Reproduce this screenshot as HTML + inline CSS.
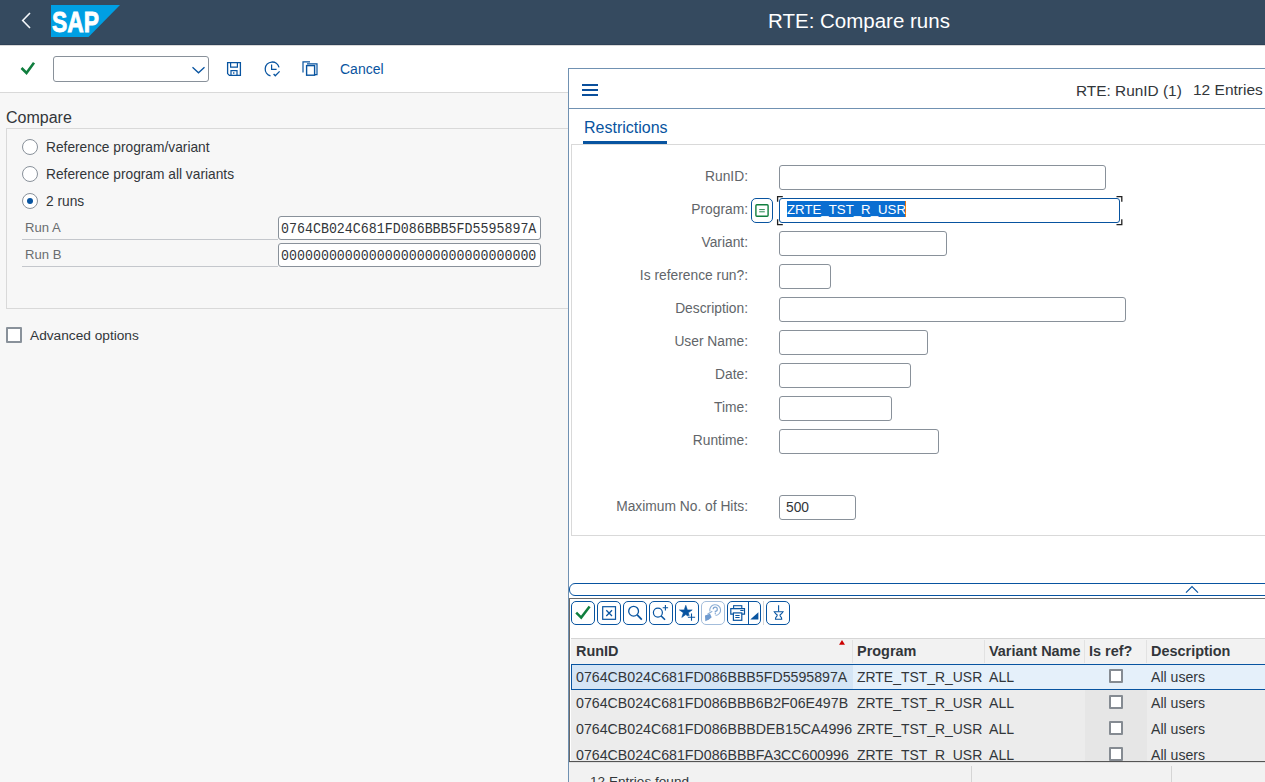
<!DOCTYPE html>
<html><head><meta charset="utf-8">
<style>
*{box-sizing:border-box;margin:0;padding:0}
html,body{width:1265px;height:782px;overflow:hidden;background:#f7f7f7;font-family:"Liberation Sans",sans-serif;color:#32363a}
.a{position:absolute}
.t{position:absolute;white-space:nowrap;line-height:1}
.inp{position:absolute;background:#fff;border:1px solid #89919a;border-radius:3px}
.lbl{position:absolute;white-space:nowrap;line-height:1;font-size:13.8px;color:#616569;text-align:right;right:517px}
.radio{position:absolute;width:16px;height:16px;border:1px solid #89919a;border-radius:50%;background:#fff}
.btn{position:absolute;top:601px;width:24px;height:24px;border:1px solid #0854a0;border-radius:5px;background:#fff}
.gh{position:absolute;top:644px;font-weight:bold;font-size:14.45px;line-height:1;white-space:nowrap;color:#32363a}
.r{position:absolute;font-size:14.1px;line-height:1;white-space:nowrap;color:#32363a}
.cb{position:absolute;left:1109px;width:14px;height:14px;border:2px solid #858b92;background:#fff;border-radius:1px}
</style></head><body>

<!-- shell header -->
<div class="a" style="left:0;top:0;width:1265px;height:45px;background:#354a5f;border-bottom:1px solid #2e4156;box-shadow:0 1px 1px rgba(0,0,0,0.12)"></div>
<svg class="a" style="left:0;top:0" width="130" height="44" viewBox="0 0 130 44">
  <path d="M30 13 L22.7 20.5 L30 28" fill="none" stroke="#f4f7fa" stroke-width="1.6"/>
  <polygon points="51,5 120,5 88.5,37 51,37" fill="#009fe3"/>
  <text x="52" y="32" font-family="Liberation Sans" font-weight="bold" font-size="30" fill="#fff" stroke="#fff" stroke-width="0.9" textLength="47" lengthAdjust="spacingAndGlyphs">SAP</text>
</svg>
<div class="t" style="left:768px;top:11px;font-size:20.5px;color:#fff">RTE: Compare runs</div>

<!-- toolbar -->
<div class="a" style="left:0;top:46px;width:1265px;height:47px;background:#fff;border-bottom:1px solid #d9d9d9"></div>
<div class="inp" style="left:53px;top:56px;width:156px;height:26px"></div>
<div class="t" style="left:340px;top:62px;font-size:14px;color:#0854a0">Cancel</div>

<!-- left content -->
<div class="t" style="left:6px;top:110px;font-size:16px;color:#32363a">Compare</div>
<div class="a" style="left:6px;top:128px;width:600px;height:181px;border:1px solid #d9d9d9"></div>

<div class="radio" style="left:22px;top:139px"></div>
<div class="t" style="left:46px;top:141px;font-size:13.75px">Reference program/variant</div>
<div class="radio" style="left:22px;top:166px"></div>
<div class="t" style="left:46px;top:168px;font-size:13.75px">Reference program all variants</div>
<div class="radio" style="left:22px;top:193px"><div class="a" style="left:4px;top:4px;width:6px;height:6px;border-radius:50%;background:#0854a0"></div></div>
<div class="t" style="left:46px;top:195px;font-size:13.75px">2 runs</div>

<div class="t" style="left:25px;top:221px;font-size:13.1px;color:#6a6d70">Run A</div>
<div class="a" style="left:22px;top:239px;width:256px;height:1px;background:#c4c7cc"></div>
<div class="inp" style="left:278px;top:216px;width:263px;height:24px"></div>
<div class="t" style="left:281px;top:222px;font-family:'Liberation Mono',monospace;font-size:13.3px;transform:scaleY(1.12);transform-origin:0 0">0764CB024C681FD086BBB5FD5595897A</div>

<div class="t" style="left:25px;top:248px;font-size:13.1px;color:#6a6d70">Run B</div>
<div class="a" style="left:22px;top:266px;width:256px;height:1px;background:#c4c7cc"></div>
<div class="inp" style="left:278px;top:243px;width:263px;height:24px"></div>
<div class="t" style="left:281px;top:249px;font-family:'Liberation Mono',monospace;font-size:13.3px;transform:scaleY(1.12);transform-origin:0 0">00000000000000000000000000000000</div>

<div class="a" style="left:6px;top:327px;width:16px;height:16px;border:2px solid #89919a;background:#fff;border-radius:1px"></div>
<div class="t" style="left:30px;top:329px;font-size:13.7px">Advanced options</div>

<!-- dialog -->
<div class="a" style="left:568px;top:68px;width:720px;height:730px;background:#fff;border:1px solid #7091b2"></div>
<div class="a" style="left:569px;top:108px;width:700px;height:1px;background:#7091b2"></div>
<div class="t" style="left:1076px;top:83px;font-size:15.4px">RTE: RunID (1)</div>
<div class="t" style="left:1193px;top:82px;font-size:15.5px">12 Entries</div>

<div class="t" style="left:584px;top:120px;font-size:16px;color:#0854a0">Restrictions</div>
<div class="a" style="left:583px;top:141px;width:84px;height:3px;background:#0854a0"></div>
<div class="a" style="left:571px;top:144px;width:720px;height:392px;border:1px solid #d9d9d9"></div>

<!-- form -->
<div class="lbl" style="top:170px">RunID:</div>
<div class="inp" style="left:779px;top:165px;width:327px;height:25px"></div>
<div class="lbl" style="top:203px">Program:</div>
<div class="a" style="left:751px;top:198px;width:22px;height:25px;border:1px solid #0854a0;border-radius:5px;background:#fff"></div>
<div class="inp" style="left:779px;top:198px;width:341px;height:25px;border:1.3px solid #0854a0"></div>
<div class="a" style="left:787px;top:201px;width:119px;height:16px;background:#0a6ed1"></div>
<div class="a" style="left:905px;top:201px;width:1px;height:16px;background:#e9730c"></div>
<div class="t" style="left:787px;top:203px;font-size:13.25px;color:#fff">ZRTE_TST_R_USR</div>

<div class="lbl" style="top:236px">Variant:</div>
<div class="inp" style="left:779px;top:231px;width:168px;height:25px"></div>
<div class="lbl" style="top:269px">Is reference run?:</div>
<div class="inp" style="left:779px;top:264px;width:52px;height:25px"></div>
<div class="lbl" style="top:302px">Description:</div>
<div class="inp" style="left:779px;top:297px;width:347px;height:25px"></div>
<div class="lbl" style="top:335px">User Name:</div>
<div class="inp" style="left:779px;top:330px;width:149px;height:25px"></div>
<div class="lbl" style="top:368px">Date:</div>
<div class="inp" style="left:779px;top:363px;width:132px;height:25px"></div>
<div class="lbl" style="top:401px">Time:</div>
<div class="inp" style="left:779px;top:396px;width:113px;height:25px"></div>
<div class="lbl" style="top:434px">Runtime:</div>
<div class="inp" style="left:779px;top:429px;width:160px;height:25px"></div>
<div class="lbl" style="top:500px">Maximum No. of Hits:</div>
<div class="inp" style="left:779px;top:495px;width:77px;height:25px"></div>
<div class="t" style="left:786px;top:501px;font-size:13.8px">500</div>

<!-- splitter -->
<div class="a" style="left:569px;top:583px;width:720px;height:13px;border:1px solid #0854a0;border-radius:6px;background:#fff"></div>

<!-- ALV container -->
<div class="a" style="left:569px;top:598px;width:700px;height:1px;background:#6a6a6a"></div>
<div class="a" style="left:569px;top:598px;width:1px;height:164px;background:#6a6a6a"></div>

<div class="btn" style="left:571px"></div>
<div class="btn" style="left:597px"></div>
<div class="btn" style="left:623px"></div>
<div class="btn" style="left:649px"></div>
<div class="btn" style="left:675px"></div>
<div class="btn" style="left:701px;border-color:#a3bddb"></div>
<div class="btn" style="left:727px;width:34px"></div>
<div class="a" style="left:748px;top:602px;width:1px;height:22px;background:#0854a0"></div>
<div class="a" style="left:763px;top:601px;width:1px;height:24px;background:#d6d6d6"></div>
<div class="btn" style="left:766px"></div>

<!-- grid -->
<div class="a" style="left:571px;top:638px;width:700px;height:26px;background:#f2f2f2;border-top:1px solid #d6d6d6"></div>
<div class="a" style="left:852px;top:640px;width:1px;height:23px;background:#e2e2e2"></div>
<div class="a" style="left:984px;top:640px;width:1px;height:23px;background:#e2e2e2"></div>
<div class="a" style="left:1084px;top:640px;width:1px;height:23px;background:#e2e2e2"></div>
<div class="a" style="left:1146px;top:640px;width:1px;height:23px;background:#e2e2e2"></div>
<div class="a" style="left:571px;top:664px;width:700px;height:97px;background:#ececec"></div>
<div class="a" style="left:1085px;top:690px;width:62px;height:71px;background:#e6e6e6"></div>
<div class="a" style="left:571px;top:664px;width:700px;height:26px;background:#e5f0fa;border-top:1px solid #0854a0;border-bottom:1px solid #0854a0"></div>
<div class="a" style="left:571px;top:665px;width:282px;height:24px;background:#d5e5f5;border-left:1px solid #0854a0"></div>

<div class="gh" style="left:576px">RunID</div>
<div class="gh" style="left:857px">Program</div>
<div class="gh" style="left:989px">Variant Name</div>
<div class="gh" style="left:1089px">Is ref?</div>
<div class="gh" style="left:1151px">Description</div>

<div class="r" style="font-size:14.2px;left:576px;top:670px">0764CB024C681FD086BBB5FD5595897A</div>
<div class="r" style="font-size:13.95px;left:857px;top:671px">ZRTE_TST_R_USR</div>
<div class="r" style="left:989px;top:670px">ALL</div>
<div class="cb" style="top:669px"></div>
<div class="r" style="left:1151px;top:670px">All users</div>

<div class="r" style="font-size:14.2px;left:576px;top:696px">0764CB024C681FD086BBB6B2F06E497B</div>
<div class="r" style="font-size:13.95px;left:857px;top:697px">ZRTE_TST_R_USR</div>
<div class="r" style="left:989px;top:696px">ALL</div>
<div class="cb" style="top:695px"></div>
<div class="r" style="left:1151px;top:696px">All users</div>

<div class="r" style="font-size:14.2px;left:576px;top:722px">0764CB024C681FD086BBBDEB15CA4996</div>
<div class="r" style="font-size:13.95px;left:857px;top:723px">ZRTE_TST_R_USR</div>
<div class="r" style="left:989px;top:722px">ALL</div>
<div class="cb" style="top:721px"></div>
<div class="r" style="left:1151px;top:722px">All users</div>

<div class="a" style="left:571px;top:742px;width:700px;height:19px;overflow:hidden">
  <div class="r" style="font-size:14.2px;left:5px;top:6px">0764CB024C681FD086BBBFA3CC600996</div>
  <div class="r" style="font-size:13.95px;left:286px;top:7px">ZRTE_TST_R_USR</div>
  <div class="r" style="left:418px;top:6px">ALL</div>
  <div class="cb" style="left:538px;top:5px"></div>
  <div class="r" style="left:580px;top:6px">All users</div>
</div>
<div class="a" style="left:569px;top:761px;width:700px;height:1px;background:#555"></div>

<!-- status -->
<div class="a" style="left:569px;top:762px;width:700px;height:20px;background:#f2f2f2;border-top:1px solid #e0e0e0"></div>
<div class="a" style="left:971px;top:766px;width:1px;height:16px;background:#d5d5d5"></div>
<div class="a" style="left:1171px;top:766px;width:1px;height:16px;background:#d5d5d5"></div>
<div class="r" style="left:590px;top:775px;font-size:13.6px">12 Entries found</div>

<!-- icon overlay (page coordinates) -->
<svg class="a" style="left:0;top:0" width="1265" height="782" viewBox="0 0 1265 782">
  <g fill="none" stroke-linecap="butt" stroke-linejoin="miter">
    <!-- toolbar check -->
    <path d="M21.5 68 L26.5 73 L34 62.8" stroke="#107e3e" stroke-width="2.6"/>
    <!-- dropdown chevron -->
    <path d="M192.5 67.2 L198.5 72.8 L204.5 67.2" stroke="#0854a0" stroke-width="1.3"/>
    <!-- save -->
    <path d="M227.6 62.6 H240.4 V75.4 H229.4 L227.6 73.6 Z" stroke="#0854a0" stroke-width="1.3"/>
    <path d="M230.6 62.6 V67.2 H237.4 V62.6" stroke="#0854a0" stroke-width="1.2"/>
    <path d="M231 75.4 V70.6 H237 V75.4" stroke="#0854a0" stroke-width="1.2"/>
    <path d="M233.8 72 V74" stroke="#0854a0" stroke-width="1"/>
    <!-- clock -->
    <path d="M279 67.3 A7 7 0 1 0 270.5 75.8" stroke="#0854a0" stroke-width="1.3"/>
    <path d="M271.6 64.5 V69.4 H276.6" stroke="#0854a0" stroke-width="1.2"/>
    <path d="M273.6 74 L275.3 75.8 L279.6 71.4" stroke="#0854a0" stroke-width="1.3"/>
    <!-- copy -->
    <path d="M303 72.6 V61.8 H310" stroke="#0854a0" stroke-width="1.2"/>
    <path d="M307 63.8 H317 V74.6 H314.6" stroke="#0854a0" stroke-width="1.2"/>
    <rect x="306.6" y="65.6" width="8" height="9.6" stroke="#0854a0" stroke-width="1.4"/>
    <!-- hamburger -->
    <path d="M582 85 H598 M582 90 H598 M582 95 H598" stroke="#0a4f9c" stroke-width="2"/>
    <!-- program F4 icon -->
    <rect x="755.9" y="204.8" width="12.2" height="11.4" rx="1" stroke="#107e3e" stroke-width="1.4"/>
    <path d="M759.2 209.6 H764.8 M759.2 211.8 H764.8" stroke="#107e3e" stroke-width="0.9"/>
    <!-- focus brackets -->
    <path d="M782.8 196.6 H777.6 V201.8 M777.6 219.2 V224.6 H782.8 M1116.5 196.6 H1121.8 V201.8 M1121.8 219.2 V224.6 H1116.5" stroke="#222" stroke-width="1.3"/>
    <!-- splitter chevron -->
    <path d="M1186 592.7 L1192 586.7 L1198 592.7" stroke="#0854a0" stroke-width="1.2"/>
    <!-- alv buttons -->
    <path d="M576.2 612.6 L581.2 617.6 L589.6 606.4" stroke="#107e3e" stroke-width="2.5"/>
    <rect x="602.7" y="606.7" width="12.8" height="12.6" stroke="#0854a0" stroke-width="1.2"/>
    <path d="M606.3 610.3 L612 616 M612 610.3 L606.3 616" stroke="#0854a0" stroke-width="1.3"/>
    <circle cx="633.6" cy="611.2" r="4.9" stroke="#0854a0" stroke-width="1.3"/>
    <path d="M637.2 614.8 L641.8 619.6" stroke="#0854a0" stroke-width="1.7"/>
    <circle cx="657.9" cy="612.6" r="4.5" stroke="#0854a0" stroke-width="1.2"/>
    <path d="M661.2 616 L665 619.8" stroke="#0854a0" stroke-width="1.6"/>
    <path d="M665.4 605 V610.4 M662.7 607.7 H668.1" stroke="#0854a0" stroke-width="1.1"/>
    <path d="M685.8 605.3 L687.4 609.9 L692.2 609.9 L688.3 612.8 L689.8 617.4 L685.8 614.6 L681.8 617.4 L683.3 612.8 L679.4 609.9 L684.2 609.9 Z" fill="#0854a0" stroke="#0854a0" stroke-width="0.6"/>
    <path d="M691.5 613.6 V620.8 M687.9 617.2 H695.1" stroke="#fff" stroke-width="3"/>
    <path d="M691.5 613.6 V620.8 M687.9 617.2 H695.1" stroke="#0854a0" stroke-width="1.1"/>
    <!-- help disabled -->
    <path d="M709.9 611.3 A5.4 5.4 0 1 1 715.6 615.5" stroke="#8fb0d6" stroke-width="1.1"/>
    <path d="M713.2 609.3 A2.05 2.05 0 1 1 715.3 611.3 V612.4" stroke="#7fa5d2" stroke-width="1.2"/>
    <circle cx="715.3" cy="613.7" r="0.7" fill="#7fa5d2" stroke="none"/>
    <path d="M707.5 614.2 L712.3 611.2" stroke="#8fb0d6" stroke-width="1.1"/>
    <path d="M705 615.4 L710 613.8 L711.7 617.2 L709 619.6 L705.3 621.2 Z" fill="#6f9bd0" stroke="none"/>
    <!-- printer -->
    <rect x="733.6" y="605.7" width="8.2" height="2.8" stroke="#0854a0" stroke-width="1.1"/>
    <path d="M733 614.2 H730.8 V608.7 H744.5 V614.2 H742" stroke="#0854a0" stroke-width="1.2"/>
    <rect x="733.4" y="612.9" width="8.4" height="7.4" stroke="#0854a0" stroke-width="1.2"/>
    <path d="M735.3 615.5 H739.6 M735.3 617.5 H739.6 M740.3 610.5 H743.6" stroke="#0854a0" stroke-width="1"/>
    <path d="M750.3 619.6 L758.4 619.6 L758.4 612.3 Z" fill="#0854a0" stroke="none"/>
    <!-- pin -->
    <path d="M778.6 605.2 V611.4" stroke="#0854a0" stroke-width="1.1"/>
    <path d="M774.3 611.7 H783 L781.6 613.7 L780.1 614.8 V615.9 L781.5 617.6 L781.7 619.3 H775.5 L775.7 617.6 L777.1 615.9 V614.8 L775.6 613.7 Z" stroke="#0854a0" stroke-width="1.1"/>
    <!-- sort triangle -->
    <path d="M839 644.8 L842 640 L845 644.8 Z" fill="#cc0000" stroke="none"/>
  </g>
</svg>

</body></html>
